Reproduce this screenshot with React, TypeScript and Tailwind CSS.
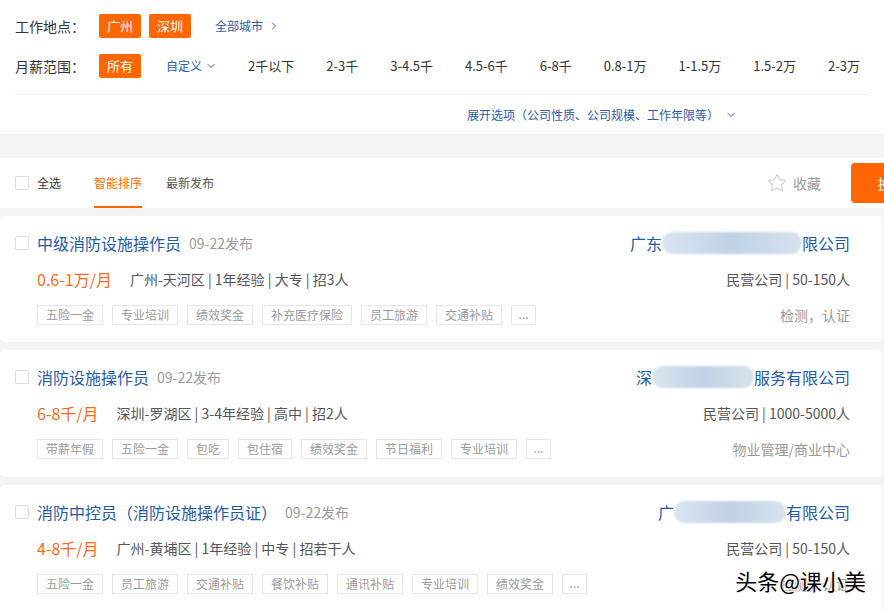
import React from 'react';
import { Star, ChevronRight, ChevronDown } from 'lucide-react';

const salaries = ['2千以下', '2-3千', '3-4.5千', '4.5-6千', '6-8千', '0.8-1万', '1-1.5万', '1.5-2万', '2-3万'];

type Job = {
  title: string;
  date: string;
  salary: string;
  info: string;
  tags: string[];
  pre: string;
  blur: string;
  post: string;
  meta: string;
  industry: string;
  h: string;
};

const jobs: Job[] = [
  {
    title: '中级消防设施操作员',
    date: '09-22发布',
    salary: '0.6-1万/月',
    info: '广州-天河区 | 1年经验 | 大专 | 招3人',
    tags: ['五险一金', '专业培训', '绩效奖金', '补充医疗保险', '员工旅游', '交通补贴'],
    pre: '广东',
    blur: 'w-[140px]',
    post: '限公司',
    meta: '民营公司 | 50-150人',
    industry: '检测，认证',
    h: 'h-[126px]',
  },
  {
    title: '消防设施操作员',
    date: '09-22发布',
    salary: '6-8千/月',
    info: '深圳-罗湖区 | 3-4年经验 | 高中 | 招2人',
    tags: ['带薪年假', '五险一金', '包吃', '包住宿', '绩效奖金', '节日福利', '专业培训'],
    pre: '深',
    blur: 'w-[102px]',
    post: '服务有限公司',
    meta: '民营公司 | 1000-5000人',
    industry: '物业管理/商业中心',
    h: 'h-[127px]',
  },
  {
    title: '消防中控员（消防设施操作员证）',
    date: '09-22发布',
    salary: '4-8千/月',
    info: '广州-黄埔区 | 1年经验 | 中专 | 招若干人',
    tags: ['五险一金', '员工旅游', '交通补贴', '餐饮补贴', '通讯补贴', '专业培训', '绩效奖金'],
    pre: '广',
    blur: 'w-[112px]',
    post: '有限公司',
    meta: '民营公司 | 50-150人',
    industry: '检测，认证',
    h: 'h-[140px]',
  },
];

function Box() {
  return <span className="inline-block w-[14px] h-[14px] border border-[#dcdcdc] rounded-[2px] bg-white shrink-0" />;
}

function JobCard({ job, watermark }: { job: Job; watermark?: boolean }) {
  return (
    <div className={`relative w-[882px] ${job.h} mt-[8px] bg-white rounded-[5px] pl-[15px] pr-[32px] pt-[16px] flex whitespace-nowrap`}>
      <div className="flex-1">
        <div className="flex items-center h-[22px]">
          <Box />
          <span className="ml-[8px] text-[16px] leading-[22px] text-[#1e5ba9]">{job.title}</span>
          <span className="ml-[8px] text-[14px] text-[#999]">{job.date}</span>
        </div>
        <div className="flex items-center h-[22px] mt-[14px] pl-[22px]">
          <span className="text-[16px] text-[#ff6a1a]">{job.salary}</span>
          <span className="ml-[18px] text-[14px] text-[#555]">{job.info}</span>
        </div>
        <div className="flex items-center gap-[9px] mt-[15px] pl-[22px]">
          {job.tags.map((t) => (
            <span key={t} className="h-[20px] px-[8px] border border-[#e6e6e6] text-[12px] leading-[18px] text-[#999]">
              {t}
            </span>
          ))}
          <span className="h-[20px] w-[25px] border border-[#e6e6e6] text-[12px] leading-[16px] text-[#999] text-center">...</span>
        </div>
      </div>
      <div className="flex flex-col items-end">
        <div className="flex items-center h-[22px] text-[16px] text-[#1e5ba9]">
          <span>{job.pre}</span>
          <span className={`${job.blur} h-[22px] rounded-full blur-[1px] bg-gradient-to-r from-[#dbe5f0] via-[#bfd2e6] to-[#d7e2ee]`} />
          <span>{job.post}</span>
        </div>
        <div className="h-[22px] mt-[14px] flex items-center text-[14px] text-[#555]">{job.meta}</div>
        <div className="h-[20px] mt-[15px] flex items-center text-[14px] text-[#999]">{job.industry}</div>
      </div>
      {watermark && (
        <div className="absolute right-[16px] top-[82px] text-[22px] leading-[26px] text-black [text-shadow:0_0_2px_#fff,0_0_2px_#fff,0_0_3px_#fff]">
          头条@课小美
        </div>
      )}
    </div>
  );
}

export default function App() {
  return (
    <div className="w-[884px] h-[610px] overflow-hidden bg-[#f4f4f4] font-['Noto_Sans_CJK_SC','Noto_Sans',sans-serif] text-[#333] whitespace-nowrap">
      {/* Filters */}
      <div className="bg-white h-[134px] px-[15px] pt-[14px]">
        <div className="flex items-center h-[24px]">
          <span className="w-[84px] shrink-0 text-[14px]">工作地点：</span>
          <span className="shrink-0 h-[24px] px-[8px] rounded-[2px] bg-[#ff6600] text-white text-[13px] leading-[24px]">广州</span>
          <span className="shrink-0 ml-[8px] h-[24px] px-[8px] rounded-[2px] bg-[#ff6600] text-white text-[13px] leading-[24px]">深圳</span>
          <span className="shrink-0 ml-[24px] flex items-center text-[12px] text-[#2a5caa]">
            全部城市
            <ChevronRight className="ml-[5px] w-[12px] h-[12px]" strokeWidth={2} />
          </span>
        </div>
        <div className="flex items-center h-[24px] mt-[16px]">
          <span className="w-[84px] shrink-0 text-[14px]">月薪范围：</span>
          <span className="shrink-0 h-[24px] px-[8px] rounded-[2px] bg-[#ff6600] text-white text-[13px] leading-[24px]">所有</span>
          <span className="shrink-0 ml-[25px] flex items-center text-[12px] text-[#2a5caa]">
            自定义
            <ChevronDown className="ml-[3px] w-[12px] h-[12px]" strokeWidth={2} />
          </span>
          <div className="shrink-0 ml-[31px] flex items-center gap-[32px] text-[13px] text-[#333]">
            {salaries.map((s) => (
              <span key={s} className="shrink-0">{s}</span>
            ))}
          </div>
        </div>
        <div className="mt-[16px] border-t border-[#efefef] h-[40px] flex items-center pl-[452px] text-[12px] text-[#2a5caa]">
          展开选项（公司性质、公司规模、工作年限等）
          <ChevronDown className="ml-[6px] w-[12px] h-[12px]" strokeWidth={2} />
        </div>
      </div>

      {/* Sort bar */}
      <div className="mt-[24px] w-[960px] h-[50px] bg-white flex items-center pl-[15px]">
        <Box />
        <span className="ml-[8px] text-[12px] text-[#333]">全选</span>
        <div className="ml-[33px] h-[50px] relative flex items-center">
          <span className="text-[12px] text-[#ff6600]">智能排序</span>
          <span className="absolute left-0 right-0 bottom-0 h-[2px] bg-[#ff6600]" />
        </div>
        <span className="ml-[24px] text-[12px] text-[#555]">最新发布</span>
        <div className="ml-auto flex items-center text-[#999]">
          <Star className="w-[20px] h-[20px] text-[#cfcfcf]" strokeWidth={1.5} />
          <span className="ml-[6px] text-[14px]">收藏</span>
        </div>
        <div className="shrink-0 ml-[30px] w-[109px] h-[40px] rounded-[4px] bg-[#ff6600] text-white text-[14px] flex items-center justify-center">
          投递简历
        </div>
      </div>

      {/* Jobs */}
      {jobs.map((j, i) => (
        <JobCard key={j.title} job={j} watermark={i === 2} />
      ))}
    </div>
  );
}
